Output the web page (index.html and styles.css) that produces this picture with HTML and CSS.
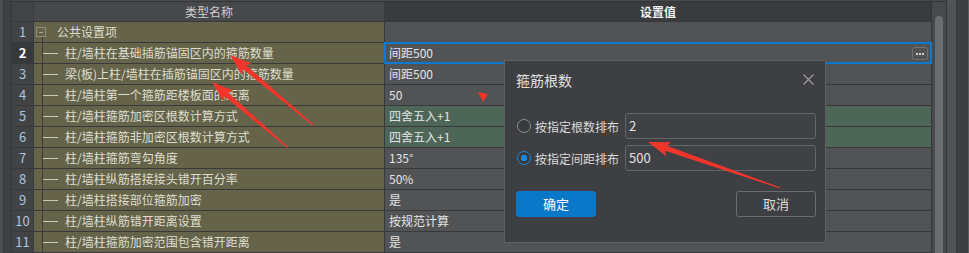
FILE: index.html
```html
<!DOCTYPE html>
<html lang="zh-CN">
<head>
    <meta charset="UTF-8">
    <title>箍筋设置</title>
    <link rel="stylesheet" href="styles.css">
</head>
<body>
    <div class="app">
        <div class="rail"></div>
        <div class="gutter"></div>

        <div class="main">
            <div class="topband"></div>
            <div class="grid-area">
                <div class="table">
                    <div class="row head">
                        <div class="num"></div>
                        <div class="name">类型名称</div>
                        <div class="val">设置值</div>
                    </div>
                    <div class="row">
                        <div class="num">1</div>
                        <div class="name parent"><span class="toggle"></span>公共设置项</div>
                        <div class="val"></div>
                    </div>
                    <div class="row current">
                        <div class="num">2</div>
                        <div class="name child"><span class="branch"></span>柱/墙柱在基础插筋锚固区内的箍筋数量</div>
                        <div class="val selected">
                            间距500
                            <svg class="more" width="16" height="13" viewBox="0 0 16 13">
                                <rect x="0.5" y="0.5" width="15" height="12" rx="2" fill="none" stroke="#727375"/>
                                <rect x="4" y="6" width="2" height="2" fill="#d0d0d0"/>
                                <rect x="7" y="6" width="2" height="2" fill="#d0d0d0"/>
                                <rect x="10" y="6" width="2" height="2" fill="#d0d0d0"/>
                            </svg>
                        </div>
                    </div>
                    <div class="row">
                        <div class="num">3</div>
                        <div class="name child"><span class="branch"></span>梁(板)上柱/墙柱在插筋锚固区内的箍筋数量</div>
                        <div class="val">间距500</div>
                    </div>
                    <div class="row">
                        <div class="num">4</div>
                        <div class="name child"><span class="branch"></span>柱/墙柱第一个箍筋距楼板面的距离</div>
                        <div class="val">50</div>
                    </div>
                    <div class="row">
                        <div class="num">5</div>
                        <div class="name child"><span class="branch"></span>柱/墙柱箍筋加密区根数计算方式</div>
                        <div class="val changed">四舍五入+1</div>
                    </div>
                    <div class="row">
                        <div class="num">6</div>
                        <div class="name child"><span class="branch"></span>柱/墙柱箍筋非加密区根数计算方式</div>
                        <div class="val changed">四舍五入+1</div>
                    </div>
                    <div class="row">
                        <div class="num">7</div>
                        <div class="name child"><span class="branch"></span>柱/墙柱箍筋弯勾角度</div>
                        <div class="val">135°</div>
                    </div>
                    <div class="row">
                        <div class="num">8</div>
                        <div class="name child"><span class="branch"></span>柱/墙柱纵筋搭接接头错开百分率</div>
                        <div class="val">50%</div>
                    </div>
                    <div class="row">
                        <div class="num">9</div>
                        <div class="name child"><span class="branch"></span>柱/墙柱搭接部位箍筋加密</div>
                        <div class="val">是</div>
                    </div>
                    <div class="row">
                        <div class="num">10</div>
                        <div class="name child"><span class="branch"></span>柱/墙柱纵筋错开距离设置</div>
                        <div class="val">按规范计算</div>
                    </div>
                    <div class="row">
                        <div class="num">11</div>
                        <div class="name child"><span class="branch"></span>柱/墙柱箍筋加密范围包含错开距离</div>
                        <div class="val">是</div>
                    </div>
                </div>
                <div class="scrollbar"><div class="thumb"></div></div>
            </div>
        </div>

        <div class="side-a"></div>
        <div class="side-b"></div>
    </div>

    <div class="dialog">
        <div class="dlg-title">
            <span>箍筋根数</span>
            <svg class="close" width="11" height="11" viewBox="0 0 11 11">
                <path d="M0.5 0.5 L10.5 10.5 M10.5 0.5 L0.5 10.5" stroke="#a0a1a3" stroke-width="1.1" fill="none"/>
            </svg>
        </div>
        <div class="dlg-body">
            <div class="opt">
                <span class="radio"></span>
                <span class="opt-label">按指定根数排布</span>
                <span class="field">2</span>
            </div>
            <div class="opt">
                <span class="radio on"></span>
                <span class="opt-label">按指定间距排布</span>
                <span class="field">500</span>
            </div>
        </div>
        <div class="dlg-actions">
            <span class="btn primary">确定</span>
            <span class="btn">取消</span>
        </div>
    </div>

    <!-- red annotation arrows -->
    <svg class="marks" width="969" height="253" viewBox="0 0 969 253">
        <g fill="#f0352b">
            <polygon transform="translate(230 55) rotate(40.1)" points="0,0 22,-7.5 19,-2.6 109,-0.7 109,0.7 19,2.6 22,7.5"/>
            <polygon transform="translate(212 82) rotate(40.9)" points="0,0 22,-7.5 19,-2.6 100,-0.7 100,0.7 19,2.6 22,7.5"/>
            <polygon transform="translate(648 142) rotate(19.2)" points="0,0 22,-7.5 19,-2.6 140,-0.6 140,0.6 19,2.6 22,7.5"/>
            <polygon points="478,92 488,94 483,102"/>
        </g>
    </svg>
</body>
</html>
```

FILE: styles.css
```css
body {
    margin: 0;
    width: 969px;
    height: 253px;
    overflow: hidden;
    background-color: #4b4c4e;
    font-family: "Noto Sans CJK SC", "Noto Sans", sans-serif;
    font-size: 12px;
    color: #dcdcdc;
}
.app {
    display: flex;
    height: 253px;
}
.rail {
    width: 3px;
    background-color: #4c4d4f;
    border-right: 1px solid #343537;
}
.gutter {
    width: 7px;
    background-color: #3f4042;
    border-right: 1px solid #343537;
}
.main {
    width: 934px;
    display: flex;
    flex-direction: column;
}
.topband {
    height: 5px;
    background-color: #4a4b4d;
    border-bottom: 1px solid #343537;
}
.grid-area {
    display: flex;
    flex: 1;
}
.table {
    width: 919px;
    border-right: 1px solid #343537;
}
.row {
    display: grid;
    grid-template-columns: 21px 350px 546px;
    column-gap: 1px;
    height: 20px;
    line-height: 20px;
    background-color: #38393a;
    border-bottom: 1px solid #38393a;
}
.row.head {
    height: 19px;
    line-height: 19px;
}
.num {
    background-color: #424345;
    color: #a8c5e1;
    font-size: 13px;
    text-align: center;
}
.name {
    display: flex;
    align-items: center;
    background-color: #65644b;
    color: #dedece;
    white-space: nowrap;
}
.val {
    display: flex;
    align-items: center;
    padding-left: 4px;
    background-color: #525355;
    color: #e4e4e4;
}
.head .num {
    background-color: #434446;
}
.head .name {
    justify-content: center;
    background-color: #47484a;
    color: #cfcfcf;
}
.head .val {
    justify-content: center;
    padding-left: 0;
    background-color: #3a3b3d;
    color: #f0f0f0;
    font-weight: bold;
}
.current .num {
    background-color: #38393b;
    color: #ffffff;
    font-weight: bold;
}
.parent {
    background: linear-gradient(#3c3c34, #3c3c34) no-repeat 8px 15px / 1px 5px, #65644b;
}
.toggle {
    box-sizing: border-box;
    width: 10px;
    height: 10px;
    margin: 0 11px 0 2px;
    border: 1px solid #8c8b7c;
    background: linear-gradient(#a8a898, #a8a898) no-repeat center / 4px 1px;
}
.child {
    background: linear-gradient(#3c3c34, #3c3c34) no-repeat 8px 0 / 1px 100%, #65644b;
}
.branch {
    width: 15px;
    height: 1px;
    margin: 0 7px 0 9px;
    background-color: #c9c9b9;
}
.changed {
    background-color: #4e6657;
}
.selected {
    position: relative;
    z-index: 1;
    justify-content: space-between;
    outline: 2px solid #0b79cf;
    outline-offset: -1px;
    padding-right: 3px;
}
.scrollbar {
    width: 14px;
    display: flex;
    justify-content: center;
    background-color: #48494c;
}
.thumb {
    width: 8px;
    margin-top: 14px;
    border-radius: 4px 4px 0 0;
    background-color: #6b6c6f;
}
.side-a {
    width: 9px;
    background-color: #515254;
    border-left: 1px solid #343537;
}
.side-b {
    width: 11px;
    background-color: #3d3e40;
    border-left: 1px solid #343537;
    border-right: 1px solid #5c5d5f;
}

/* dialog */
.dialog {
    position: absolute;
    left: 504px;
    top: 60px;
    z-index: 2;
    box-sizing: border-box;
    width: 322px;
    height: 183px;
    padding: 0 9px 0 11px;
    background-color: #3e3f42;
    border: 1px solid #5e5f62;
}
.dlg-title {
    display: flex;
    justify-content: space-between;
    align-items: center;
    height: 37px;
    padding-right: 2px;
    font-size: 14px;
    color: #e0e0e0;
}
.dlg-body {
    margin-top: 15px;
    display: flex;
    flex-direction: column;
    gap: 6px;
}
.opt {
    display: flex;
    align-items: center;
    height: 26px;
}
.radio {
    box-sizing: border-box;
    width: 14px;
    height: 14px;
    margin-left: 1px;
    border: 1px solid #8d8e90;
    border-radius: 50%;
    background-color: #393a3c;
}
.radio.on {
    border: 1.5px solid #1c86da;
    background: radial-gradient(circle, #1c86da 0 3px, #393a3c 3.5px);
}
.opt-label {
    width: 84px;
    margin: 0 6px 0 4px;
    color: #dadada;
    white-space: nowrap;
}
.field {
    flex: 1;
    box-sizing: border-box;
    height: 26px;
    line-height: 24px;
    padding-left: 3px;
    border: 1px solid #646568;
    border-radius: 3px;
    background-color: #404144;
    color: #e2e2e2;
    font-size: 13px;
}
.dlg-actions {
    display: flex;
    justify-content: space-between;
    margin-top: 20px;
}
.btn {
    box-sizing: border-box;
    width: 80px;
    height: 26px;
    line-height: 24px;
    text-align: center;
    border: 1px solid #6b6c6f;
    border-radius: 3px;
    color: #dcdcdc;
    font-size: 13px;
}
.btn.primary {
    border-color: #0a78c8;
    background-color: #0a78c8;
    color: #ffffff;
}
.marks {
    position: absolute;
    left: 0;
    top: 0;
    z-index: 3;
}
```
